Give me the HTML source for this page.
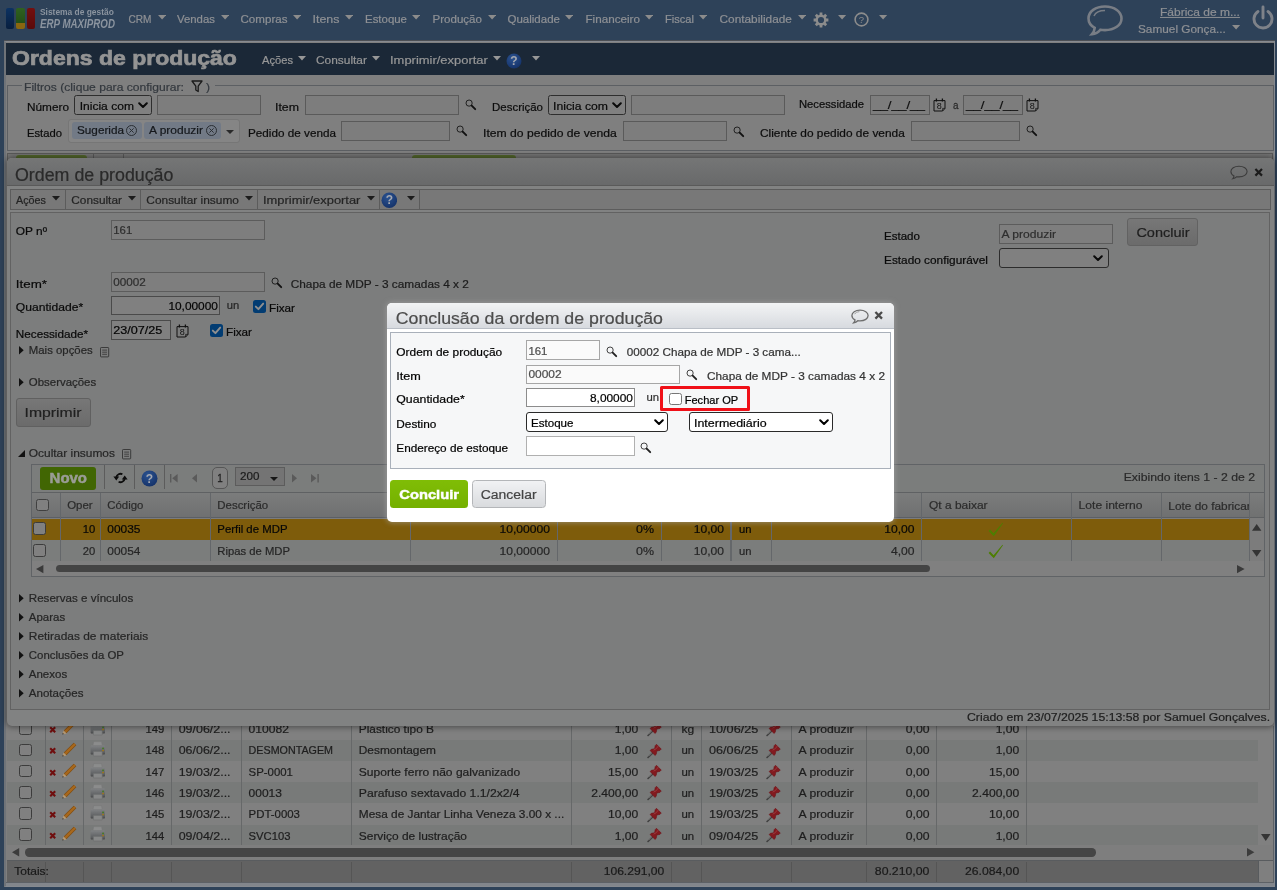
<!DOCTYPE html>
<html><head><meta charset="utf-8"><title>Ordens de produção</title>
<style>
html,body{margin:0;padding:0;}
body{width:1277px;height:890px;overflow:hidden;background:#2e4259;position:relative;font-family:"Liberation Sans",sans-serif;}
div,span.t,svg{position:absolute;box-sizing:border-box;}
span.t{white-space:nowrap;display:block;transform-origin:0 84.65%;-webkit-text-stroke:0.22px currentColor;}
</style></head><body><div id="root" style="left:0;top:0;width:1277px;height:890px;will-change:transform;">
<div style="left:0px;top:0px;width:1277px;height:890px;background:#2e4259;"></div>
<div style="left:6px;top:8px;width:8px;height:21px;border-radius:2px;background:linear-gradient(#0c3262,#081f3f);"></div>
<div style="left:16px;top:8px;width:9px;height:15px;border-radius:2px 2px 0 0;background:linear-gradient(#2f6120,#245016);"></div>
<div style="left:16px;top:23px;width:9px;height:6px;background:#8a6710;border-radius:0 0 2px 2px;"></div>
<div style="left:27px;top:8px;width:8px;height:21px;border-radius:2px;background:linear-gradient(#740f0f,#5a0a0a);"></div>
<span class="t" style="left:40.00px;top:7px;font-size:8.427px;line-height:10px;color:#8b949f;transform-origin:0 8px;transform:scaleY(1.172);font-weight:bold;-webkit-text-stroke:0.29px currentColor;-webkit-text-stroke:0;">Sistema de gestão</span>
<span class="t" style="left:40.00px;top:19px;font-size:9.758px;line-height:11px;color:#8b949f;transform-origin:0 9px;transform:scaleY(1.226);font-weight:bold;-webkit-text-stroke:0.34px currentColor;font-style:italic;-webkit-text-stroke:0;">ERP MAXIPROD</span>
<span class="t" style="left:128.50px;top:14px;font-size:10.099px;line-height:11px;color:#8e9094;transform-origin:0 9px;transform:scaleY(1.133);">CRM</span>
<svg style="left:157.7px;top:14.6px;" width="8.2" height="5.5" viewBox="0 0 8.2 5.5"><path d="M0 0H8.2L4.1 4.5Z" fill="#8c8c8c"/></svg>
<span class="t" style="left:177.00px;top:13px;font-size:11.389px;line-height:12px;color:#8e9094;transform-origin:0 10px;transform:scaleY(1.004);">Vendas</span>
<svg style="left:221.2px;top:14.6px;" width="8.2" height="5.5" viewBox="0 0 8.2 5.5"><path d="M0 0H8.2L4.1 4.5Z" fill="#8c8c8c"/></svg>
<span class="t" style="left:240.50px;top:13px;font-size:11.586px;line-height:12px;color:#8e9094;transform-origin:0 10px;transform:scaleY(0.987);">Compras</span>
<svg style="left:292.7px;top:14.6px;" width="8.2" height="5.5" viewBox="0 0 8.2 5.5"><path d="M0 0H8.2L4.1 4.5Z" fill="#8c8c8c"/></svg>
<span class="t" style="left:312.50px;top:12px;font-size:12.454px;line-height:14px;color:#8e9094;transform-origin:0 11px;transform:scaleY(0.919);">Itens</span>
<svg style="left:345.2px;top:14.6px;" width="8.2" height="5.5" viewBox="0 0 8.2 5.5"><path d="M0 0H8.2L4.1 4.5Z" fill="#8c8c8c"/></svg>
<span class="t" style="left:365.00px;top:13px;font-size:11.446px;line-height:12px;color:#8e9094;transform-origin:0 10px;transform:scaleY(0.999);">Estoque</span>
<svg style="left:412.2px;top:14.6px;" width="8.2" height="5.5" viewBox="0 0 8.2 5.5"><path d="M0 0H8.2L4.1 4.5Z" fill="#8c8c8c"/></svg>
<span class="t" style="left:432.50px;top:13px;font-size:11.563px;line-height:12px;color:#8e9094;transform-origin:0 10px;transform:scaleY(0.989);">Produção</span>
<svg style="left:487.7px;top:14.6px;" width="8.2" height="5.5" viewBox="0 0 8.2 5.5"><path d="M0 0H8.2L4.1 4.5Z" fill="#8c8c8c"/></svg>
<span class="t" style="left:507.50px;top:13px;font-size:11.515px;line-height:12px;color:#8e9094;transform-origin:0 10px;transform:scaleY(0.993);">Qualidade</span>
<svg style="left:565.2px;top:14.6px;" width="8.2" height="5.5" viewBox="0 0 8.2 5.5"><path d="M0 0H8.2L4.1 4.5Z" fill="#8c8c8c"/></svg>
<span class="t" style="left:585.50px;top:12px;font-size:11.673px;line-height:13px;color:#8e9094;transform-origin:0 11px;transform:scaleY(0.980);">Financeiro</span>
<svg style="left:645.2px;top:14.6px;" width="8.2" height="5.5" viewBox="0 0 8.2 5.5"><path d="M0 0H8.2L4.1 4.5Z" fill="#8c8c8c"/></svg>
<span class="t" style="left:665.00px;top:13px;font-size:11.105px;line-height:12px;color:#8e9094;transform-origin:0 10px;transform:scaleY(1.030);">Fiscal</span>
<svg style="left:699.2px;top:14.6px;" width="8.2" height="5.5" viewBox="0 0 8.2 5.5"><path d="M0 0H8.2L4.1 4.5Z" fill="#8c8c8c"/></svg>
<span class="t" style="left:719.50px;top:12px;font-size:11.855px;line-height:14px;color:#8e9094;transform-origin:0 11px;transform:scaleY(0.965);">Contabilidade</span>
<svg style="left:797.7px;top:14.6px;" width="8.2" height="5.5" viewBox="0 0 8.2 5.5"><path d="M0 0H8.2L4.1 4.5Z" fill="#8c8c8c"/></svg>
<svg style="left:813px;top:12px;" width="16" height="16" viewBox="0 0 16 16"><g fill="none" stroke="#8c8c8c"><circle cx="8" cy="8" r="4.3" stroke-width="2.4"/><path d="M8 0.6V3M8 13V15.4M0.6 8H3M13 8H15.4M2.8 2.8L4.5 4.5M11.5 11.5L13.2 13.2M2.8 13.2L4.5 11.5M11.5 4.5L13.2 2.8" stroke-width="2.8"/></g></svg>
<svg style="left:838.4px;top:14.6px;" width="8.2" height="5.5" viewBox="0 0 8.2 5.5"><path d="M0 0H8.2L4.1 4.5Z" fill="#8c8c8c"/></svg>
<svg style="left:854.4px;top:12.4px;" width="15" height="15" viewBox="0 0 15 15"><circle cx="7.5" cy="7.5" r="6.4" fill="none" stroke="#8c8c8c" stroke-width="1.6"/><text x="7.5" y="11" font-size="9.5" text-anchor="middle" fill="#8c8c8c" font-family="Liberation Sans">?</text></svg>
<svg style="left:879.4px;top:14.6px;" width="8.2" height="5.5" viewBox="0 0 8.2 5.5"><path d="M0 0H8.2L4.1 4.5Z" fill="#8c8c8c"/></svg>
<svg style="left:1086px;top:4px;" width="38" height="34" viewBox="0 0 38 34"><path d="M19 2.5C9.5 2.5 2.5 7.5 2.5 14.5c0 4 2.3 7.3 6.2 9.3c-0.2 2.6-1.3 4.8-2.7 6.4c3.6-0.4 6.6-2.3 8.4-4.5c1.5 0.3 3 0.4 4.6 0.4c9.5 0 16.5-5 16.5-11.6S28.5 2.5 19 2.5Z" fill="none" stroke="#787d85" stroke-width="2.6"/><path d="M8 12c1.5-3.5 6-5.5 11-5.5" fill="none" stroke="#787d85" stroke-width="1.5"/></svg>
<span class="t" style="left:1160.00px;top:5px;font-size:11.996px;line-height:14px;color:#8e9094;transform-origin:0 11px;transform:scaleY(0.954);text-decoration:underline;">Fábrica de m...</span>
<span class="t" style="left:1138.00px;top:22px;font-size:11.815px;line-height:14px;color:#8e9094;transform-origin:0 11px;transform:scaleY(0.968);">Samuel Gonça...</span>
<svg style="left:1232.4px;top:24.7px;" width="8.2" height="5.5" viewBox="0 0 8.2 5.5"><path d="M0 0H8.2L4.1 4.5Z" fill="#8c8c8c"/></svg>
<svg style="left:1251px;top:5px;" width="24" height="26" viewBox="0 0 24 26"><path d="M7 6.5A9 9 0 1 0 17 6.5" fill="none" stroke="#7e8289" stroke-width="2.9" stroke-linecap="round"/><path d="M12 2V13" stroke="#7e8289" stroke-width="2.9" stroke-linecap="round"/></svg>
<div style="left:4px;top:40px;width:1271px;height:1px;background:#4c4f54;"></div>
<div style="left:4px;top:41px;width:1271px;height:846px;background:#7f7f7f;border:1px solid #868a90;border-left:2px solid #6f7378;"></div>
<div style="left:6px;top:43px;width:1268px;height:32px;background:#1b2837;"></div>
<span class="t" style="left:12.00px;top:44px;font-size:23.008px;line-height:26px;color:#949494;transform-origin:0 21px;transform:scaleY(0.904);font-weight:bold;-webkit-text-stroke:0.81px currentColor;">Ordens de produção</span>
<span class="t" style="left:262.00px;top:54px;font-size:11.154px;line-height:12px;color:#979797;transform-origin:0 10px;transform:scaleY(1.026);">Ações</span>
<svg style="left:297.7px;top:56px;" width="8" height="5.5" viewBox="0 0 8 5.5"><path d="M0 0H8L4.0 4.5Z" fill="#979797"/></svg>
<span class="t" style="left:316.00px;top:53px;font-size:11.916px;line-height:14px;color:#979797;transform-origin:0 11px;transform:scaleY(0.960);">Consultar</span>
<svg style="left:371.7px;top:56px;" width="8" height="5.5" viewBox="0 0 8 5.5"><path d="M0 0H8L4.0 4.5Z" fill="#979797"/></svg>
<span class="t" style="left:390.00px;top:52px;font-size:12.969px;line-height:15px;color:#979797;transform-origin:0 12px;transform:scaleY(0.882);">Imprimir/exportar</span>
<svg style="left:492.7px;top:56px;" width="8" height="5.5" viewBox="0 0 8 5.5"><path d="M0 0H8L4.0 4.5Z" fill="#979797"/></svg>
<svg style="left:506.0px;top:52.5px;" width="16.0" height="16.0" viewBox="0 0 16.0 16.0"><defs><radialGradient id="hg514_60" cx="0.4" cy="0.3" r="0.8"><stop offset="0" stop-color="#2c5390"/><stop offset="1" stop-color="#122f66"/></radialGradient></defs><circle cx="8.0" cy="8.0" r="7.5" fill="url(#hg514_60)"/><text x="8.0" y="12.2" font-size="12" font-weight="bold" text-anchor="middle" fill="#a4a8b0" font-family="Liberation Sans">?</text></svg>
<svg style="left:531.5px;top:56px;" width="8" height="5.5" viewBox="0 0 8 5.5"><path d="M0 0H8L4.0 4.5Z" fill="#979797"/></svg>
<div style="left:7px;top:85px;width:1267px;height:66px;border:1px solid #5c5f63;"></div>
<div style="left:22px;top:80px;width:193px;height:14px;background:#7f7f7f;"></div>
<span class="t" style="left:24.00px;top:80px;font-size:12.096px;line-height:14px;color:#33383e;transform-origin:0 11px;transform:scaleY(0.946);">Filtros (clique para configurar:</span>
<svg style="left:191px;top:80px;" width="12" height="13" viewBox="0 0 12 13"><path d="M1 1H11L7.2 6.2V11.5L4.8 10V6.2Z" fill="none" stroke="#1b1b1b" stroke-width="1.3" stroke-linejoin="round"/></svg>
<span class="t" style="left:206.00px;top:80px;font-size:12.011px;line-height:14px;color:#33383e;transform-origin:0 11px;transform:scaleY(0.952);">)</span>
<span class="t" style="left:27.00px;top:100px;font-size:11.809px;line-height:14px;color:#0d0d0d;transform-origin:0 11px;transform:scaleY(0.969);">Número</span>
<div style="left:74px;top:95px;width:78px;height:20px;background:#808080;border:1px solid #2e2e2e;border-radius:2.5px;"></div>
<span class="t" style="left:79.70px;top:99px;font-size:12.063px;line-height:14px;color:#0a0a0a;transform-origin:0 11px;transform:scaleY(0.948);">Inicia com</span>
<svg style="left:137.5px;top:101.5px;" width="10" height="7" viewBox="0 0 10 7"><path d="M1.2 1.2L5 5L8.8 1.2" fill="none" stroke="#0a0a0a" stroke-width="2" stroke-linecap="round" stroke-linejoin="round"/></svg>
<div style="left:157px;top:95px;width:104px;height:20px;background:#7d7d7d;border:1px solid #5a5a5a;"></div>
<span class="t" style="left:275.00px;top:100px;font-size:12.340px;line-height:14px;color:#0d0d0d;transform-origin:0 11px;transform:scaleY(0.927);">Item</span>
<div style="left:305px;top:95px;width:154px;height:20px;background:#7d7d7d;border:1px solid #5a5a5a;"></div>
<svg style="left:465px;top:99px;" width="12" height="12" viewBox="0 0 12 12"><circle cx="4.1" cy="4.1" r="3.1" fill="none" stroke="#111" stroke-width="1" opacity="0.85"/><path d="M6.7 6.7L10.2 10.2" stroke="#111" stroke-width="1.9" stroke-linecap="round"/></svg>
<span class="t" style="left:492.00px;top:101px;font-size:11.471px;line-height:12px;color:#0d0d0d;transform-origin:0 10px;transform:scaleY(0.997);">Descrição</span>
<div style="left:548px;top:95px;width:78px;height:20px;background:#808080;border:1px solid #2e2e2e;border-radius:2.5px;"></div>
<span class="t" style="left:553.00px;top:99px;font-size:12.218px;line-height:14px;color:#0a0a0a;transform-origin:0 11px;transform:scaleY(0.936);">Inicia com</span>
<svg style="left:611.5px;top:101.5px;" width="10" height="7" viewBox="0 0 10 7"><path d="M1.2 1.2L5 5L8.8 1.2" fill="none" stroke="#0a0a0a" stroke-width="2" stroke-linecap="round" stroke-linejoin="round"/></svg>
<div style="left:631px;top:95px;width:154px;height:20px;background:#7d7d7d;border:1px solid #5a5a5a;"></div>
<span class="t" style="left:799.00px;top:98px;font-size:11.243px;line-height:12px;color:#0d0d0d;transform-origin:0 10px;transform:scaleY(1.018);">Necessidade</span>
<div style="left:870px;top:95px;width:60px;height:20px;background:#7d7d7d;border:1px solid #5a5a5a;"></div>
<span class="t" style="left:873.00px;top:97px;font-size:13.359px;line-height:15px;color:#0d0d0d;transform-origin:0 12px;transform:scaleY(0.856);">__/__/__</span>
<svg style="left:933px;top:98px;" width="13" height="14" viewBox="0 0 13 14"><path d="M1 2.6H12V10.4L9.6 13H1Z" fill="none" stroke="#111" stroke-width="1" stroke-linejoin="round"/><path d="M9.6 13V10.4H12" fill="none" stroke="#111" stroke-width="0.7"/><path d="M3.4 0.6v2.8M9.4 0.6v2.8" stroke="#111" stroke-width="1.3"/><text x="6.3" y="11.4" font-size="9" text-anchor="middle" fill="#111" font-family="Liberation Sans">8</text></svg>
<span class="t" style="left:953.00px;top:100px;font-size:9.889px;line-height:11px;color:#2a2a2a;transform-origin:0 9px;transform:scaleY(1.157);">a</span>
<div style="left:963px;top:95px;width:60px;height:20px;background:#7d7d7d;border:1px solid #5a5a5a;"></div>
<span class="t" style="left:966.00px;top:97px;font-size:13.359px;line-height:15px;color:#0d0d0d;transform-origin:0 12px;transform:scaleY(0.856);">__/__/__</span>
<svg style="left:1026px;top:98px;" width="13" height="14" viewBox="0 0 13 14"><path d="M1 2.6H12V10.4L9.6 13H1Z" fill="none" stroke="#111" stroke-width="1" stroke-linejoin="round"/><path d="M9.6 13V10.4H12" fill="none" stroke="#111" stroke-width="0.7"/><path d="M3.4 0.6v2.8M9.4 0.6v2.8" stroke="#111" stroke-width="1.3"/><text x="6.3" y="11.4" font-size="9" text-anchor="middle" fill="#111" font-family="Liberation Sans">8</text></svg>
<span class="t" style="left:27.00px;top:127px;font-size:11.242px;line-height:12px;color:#0d0d0d;transform-origin:0 10px;transform:scaleY(1.018);">Estado</span>
<div style="left:68px;top:119px;width:172px;height:24px;background:#858585;border:1px solid #767676;border-radius:3px;"></div>
<div style="left:72px;top:122px;width:70px;height:17px;background:#727a86;border-radius:3px;"></div>
<span class="t" style="left:77.00px;top:123px;font-size:11.741px;line-height:13px;color:#15181c;transform-origin:0 11px;transform:scaleY(0.974);">Sugerida</span>
<svg style="left:125px;top:124px;" width="13" height="13" viewBox="0 0 13 13"><circle cx="6.5" cy="6.5" r="5" fill="none" stroke="#2a2e33" stroke-width="1"/><path d="M4.4 4.4L8.6 8.6M8.6 4.4L4.4 8.6" stroke="#2a2e33" stroke-width="1"/></svg>
<div style="left:144px;top:122px;width:77px;height:17px;background:#727a86;border-radius:3px;"></div>
<span class="t" style="left:149.00px;top:123px;font-size:11.993px;line-height:14px;color:#15181c;transform-origin:0 11px;transform:scaleY(0.954);">A produzir</span>
<svg style="left:204.5px;top:124px;" width="13" height="13" viewBox="0 0 13 13"><circle cx="6.5" cy="6.5" r="5" fill="none" stroke="#2a2e33" stroke-width="1"/><path d="M4.4 4.4L8.6 8.6M8.6 4.4L4.4 8.6" stroke="#2a2e33" stroke-width="1"/></svg>
<svg style="left:226px;top:129.5px;" width="8" height="5" viewBox="0 0 8 5"><path d="M0 0H8L4.0 4Z" fill="#2a2a2a"/></svg>
<span class="t" style="left:248.00px;top:126px;font-size:11.723px;line-height:13px;color:#0d0d0d;transform-origin:0 11px;transform:scaleY(0.976);">Pedido de venda</span>
<div style="left:341px;top:121px;width:109px;height:20px;background:#7d7d7d;border:1px solid #5a5a5a;"></div>
<svg style="left:456px;top:125px;" width="12" height="12" viewBox="0 0 12 12"><circle cx="4.1" cy="4.1" r="3.1" fill="none" stroke="#111" stroke-width="1" opacity="0.85"/><path d="M6.7 6.7L10.2 10.2" stroke="#111" stroke-width="1.9" stroke-linecap="round"/></svg>
<span class="t" style="left:483.00px;top:126px;font-size:12.173px;line-height:14px;color:#0d0d0d;transform-origin:0 11px;transform:scaleY(0.940);">Item do pedido de venda</span>
<div style="left:623px;top:121px;width:104px;height:20px;background:#7d7d7d;border:1px solid #5a5a5a;"></div>
<svg style="left:732.5px;top:125.5px;" width="12" height="12" viewBox="0 0 12 12"><circle cx="4.1" cy="4.1" r="3.1" fill="none" stroke="#111" stroke-width="1" opacity="0.85"/><path d="M6.7 6.7L10.2 10.2" stroke="#111" stroke-width="1.9" stroke-linecap="round"/></svg>
<span class="t" style="left:760.00px;top:126px;font-size:11.908px;line-height:14px;color:#0d0d0d;transform-origin:0 11px;transform:scaleY(0.961);">Cliente do pedido de venda</span>
<div style="left:911px;top:121px;width:109px;height:20px;background:#7d7d7d;border:1px solid #5a5a5a;"></div>
<svg style="left:1026px;top:125px;" width="12" height="12" viewBox="0 0 12 12"><circle cx="4.1" cy="4.1" r="3.1" fill="none" stroke="#111" stroke-width="1" opacity="0.85"/><path d="M6.7 6.7L10.2 10.2" stroke="#111" stroke-width="1.9" stroke-linecap="round"/></svg>
<div style="left:7px;top:153px;width:1266px;height:8px;background:#767676;border:1px solid #5a5a5a;"></div>
<div style="left:93px;top:154px;width:1px;height:6px;background:#5a5a5a;"></div>
<div style="left:123px;top:154px;width:1px;height:6px;background:#5a5a5a;"></div>
<div style="left:16px;top:155px;width:71px;height:6px;background:#54682c;border-radius:3px 3px 0 0;"></div>
<div style="left:412px;top:155px;width:104px;height:6px;background:#54682c;border-radius:3px 3px 0 0;"></div>
<div style="left:7px;top:718px;width:1251px;height:22px;background:#808080;"></div>
<div style="left:19px;top:722px;width:13px;height:13px;background:#808080;border:1px solid #3c3c3c;border-radius:2.5px;"></div>
<svg style="left:49px;top:725.95px;" width="8" height="8" viewBox="0 0 8 8"><path d="M1.2 1.2L6.2 6.2M6.2 1.2L1.2 6.2" stroke="#6f0e0e" stroke-width="2.1"/></svg>
<svg style="left:62.4px;top:720.15px;" width="15" height="15" viewBox="0 0 15 15"><path d="M3.1 11.9L13 2" stroke="#7f4e14" stroke-width="3.7" stroke-linecap="butt"/><path d="M3.1 11.9L13 2" stroke="#a8681c" stroke-width="2.3" stroke-linecap="butt"/><path d="M0.5 14.3L1.5 10.4L4.6 13.4Z" fill="#b89a72"/><path d="M0.4 14.4L0.8 12.9L1.9 14Z" fill="#141414"/></svg>
<svg style="left:90px;top:719.75px;" width="16" height="16" viewBox="0 0 16 16"><defs><linearGradient id="pg" x1="0" y1="0" x2="0" y2="1"><stop offset="0" stop-color="#808284"/><stop offset="0.75" stop-color="#5e6062"/><stop offset="1" stop-color="#454647"/></linearGradient></defs><path d="M3.6 0.6H11.6L12.2 4.6H3Z" fill="#8b8c8c" stroke="#767777" stroke-width="0.5"/><path d="M1.8 4.4H13.8C14.5 4.4 15 4.9 15 5.6V12.6C15 13.2 14.6 13.6 14 13.6H1.6C1 13.6 0.6 13.2 0.6 12.6V5.6C0.6 4.9 1.1 4.4 1.8 4.4Z" fill="url(#pg)"/><path d="M3.4 10.4H12.2V15H3.4Z" fill="#878888" stroke="#6c6d6d" stroke-width="0.6"/><rect x="12.2" y="6.6" width="1.7" height="1.6" rx="0.6" fill="#3f7a1e"/><rect x="12.2" y="8.8" width="1.7" height="1.5" rx="0.6" fill="#a8780c"/></svg>
<span class="t" style="left:145.40px;top:723px;font-size:11.328px;line-height:12px;color:#1e1e1e;transform-origin:0 10px;transform:scaleY(1.010);">149</span>
<span class="t" style="left:178.70px;top:722px;font-size:12.446px;line-height:14px;color:#1e1e1e;transform-origin:0 11px;transform:scaleY(0.919);">09/06/2...</span>
<span class="t" style="left:248.60px;top:722px;font-size:12.107px;line-height:14px;color:#1e1e1e;transform-origin:0 11px;transform:scaleY(0.945);">010082</span>
<span class="t" style="left:358.80px;top:722px;font-size:11.868px;line-height:14px;color:#1e1e1e;transform-origin:0 11px;transform:scaleY(0.964);">Plástico tipo B</span>
<span class="t" style="left:614.75px;top:722px;font-size:12.100px;line-height:14px;color:#1e1e1e;transform-origin:0 11px;transform:scaleY(0.945);">1,00</span>
<svg style="left:646.6px;top:720.35px;" width="17" height="17" viewBox="0 0 16 16"><path d="M1 14.6L5.6 10" stroke="#3e3e3e" stroke-width="1.5" stroke-linecap="round"/><path d="M1.8 13.4L5 10.2" stroke="#8a8a8a" stroke-width="0.5"/><path d="M7.58 12.69L8.71 11.56L9.27 8.45L12.17 7.95L13.44 6.68L8.92 2.16L7.65 3.43L7.15 6.33L4.04 6.89L2.91 8.02Z" fill="#821a1f" stroke="#6a1116" stroke-width="0.5" stroke-linejoin="round"/><path d="M6.2 7.6L8.6 6.4L10.8 3.6" fill="none" stroke="#a04045" stroke-width="0.9" opacity="0.8"/></svg>
<span class="t" style="left:681.40px;top:722px;font-size:12.025px;line-height:14px;color:#1e1e1e;transform-origin:0 11px;transform:scaleY(0.951);">kg</span>
<span class="t" style="left:709.00px;top:722px;font-size:12.665px;line-height:14px;color:#1e1e1e;transform-origin:0 11px;transform:scaleY(0.903);">10/06/25</span>
<svg style="left:765.9px;top:720.35px;" width="17" height="17" viewBox="0 0 16 16"><path d="M1 14.6L5.6 10" stroke="#3e3e3e" stroke-width="1.5" stroke-linecap="round"/><path d="M1.8 13.4L5 10.2" stroke="#8a8a8a" stroke-width="0.5"/><path d="M7.58 12.69L8.71 11.56L9.27 8.45L12.17 7.95L13.44 6.68L8.92 2.16L7.65 3.43L7.15 6.33L4.04 6.89L2.91 8.02Z" fill="#821a1f" stroke="#6a1116" stroke-width="0.5" stroke-linejoin="round"/><path d="M6.2 7.6L8.6 6.4L10.8 3.6" fill="none" stroke="#a04045" stroke-width="0.9" opacity="0.8"/></svg>
<span class="t" style="left:798.60px;top:722px;font-size:12.193px;line-height:14px;color:#1e1e1e;transform-origin:0 11px;transform:scaleY(0.938);">A produzir</span>
<span class="t" style="left:905.70px;top:722px;font-size:12.228px;line-height:14px;color:#1e1e1e;transform-origin:0 11px;transform:scaleY(0.936);">0,00</span>
<span class="t" style="left:995.65px;top:722px;font-size:12.100px;line-height:14px;color:#1e1e1e;transform-origin:0 11px;transform:scaleY(0.945);">1,00</span>
<div style="left:7px;top:740px;width:1251px;height:21px;background:#787a79;"></div>
<div style="left:19px;top:744px;width:13px;height:12px;background:#808080;border:1px solid #3c3c3c;border-radius:2.5px;"></div>
<svg style="left:49px;top:747.45px;" width="8" height="8" viewBox="0 0 8 8"><path d="M1.2 1.2L6.2 6.2M6.2 1.2L1.2 6.2" stroke="#6f0e0e" stroke-width="2.1"/></svg>
<svg style="left:62.4px;top:741.65px;" width="15" height="15" viewBox="0 0 15 15"><path d="M3.1 11.9L13 2" stroke="#7f4e14" stroke-width="3.7" stroke-linecap="butt"/><path d="M3.1 11.9L13 2" stroke="#a8681c" stroke-width="2.3" stroke-linecap="butt"/><path d="M0.5 14.3L1.5 10.4L4.6 13.4Z" fill="#b89a72"/><path d="M0.4 14.4L0.8 12.9L1.9 14Z" fill="#141414"/></svg>
<svg style="left:90px;top:741.25px;" width="16" height="16" viewBox="0 0 16 16"><defs><linearGradient id="pg" x1="0" y1="0" x2="0" y2="1"><stop offset="0" stop-color="#808284"/><stop offset="0.75" stop-color="#5e6062"/><stop offset="1" stop-color="#454647"/></linearGradient></defs><path d="M3.6 0.6H11.6L12.2 4.6H3Z" fill="#8b8c8c" stroke="#767777" stroke-width="0.5"/><path d="M1.8 4.4H13.8C14.5 4.4 15 4.9 15 5.6V12.6C15 13.2 14.6 13.6 14 13.6H1.6C1 13.6 0.6 13.2 0.6 12.6V5.6C0.6 4.9 1.1 4.4 1.8 4.4Z" fill="url(#pg)"/><path d="M3.4 10.4H12.2V15H3.4Z" fill="#878888" stroke="#6c6d6d" stroke-width="0.6"/><rect x="12.2" y="6.6" width="1.7" height="1.6" rx="0.6" fill="#3f7a1e"/><rect x="12.2" y="8.8" width="1.7" height="1.5" rx="0.6" fill="#a8780c"/></svg>
<span class="t" style="left:145.40px;top:744px;font-size:11.328px;line-height:12px;color:#1e1e1e;transform-origin:0 10px;transform:scaleY(1.010);">148</span>
<span class="t" style="left:178.70px;top:743px;font-size:12.446px;line-height:14px;color:#1e1e1e;transform-origin:0 11px;transform:scaleY(0.919);">06/06/2...</span>
<span class="t" style="left:248.60px;top:744px;font-size:10.723px;line-height:12px;color:#1e1e1e;transform-origin:0 10px;transform:scaleY(1.067);">DESMONTAGEM</span>
<span class="t" style="left:358.80px;top:743px;font-size:11.872px;line-height:14px;color:#1e1e1e;transform-origin:0 11px;transform:scaleY(0.964);">Desmontagem</span>
<span class="t" style="left:614.75px;top:743px;font-size:12.100px;line-height:14px;color:#1e1e1e;transform-origin:0 11px;transform:scaleY(0.945);">1,00</span>
<svg style="left:646.6px;top:741.85px;" width="17" height="17" viewBox="0 0 16 16"><path d="M1 14.6L5.6 10" stroke="#3e3e3e" stroke-width="1.5" stroke-linecap="round"/><path d="M1.8 13.4L5 10.2" stroke="#8a8a8a" stroke-width="0.5"/><path d="M7.58 12.69L8.71 11.56L9.27 8.45L12.17 7.95L13.44 6.68L8.92 2.16L7.65 3.43L7.15 6.33L4.04 6.89L2.91 8.02Z" fill="#821a1f" stroke="#6a1116" stroke-width="0.5" stroke-linejoin="round"/><path d="M6.2 7.6L8.6 6.4L10.8 3.6" fill="none" stroke="#a04045" stroke-width="0.9" opacity="0.8"/></svg>
<span class="t" style="left:681.40px;top:744px;font-size:11.418px;line-height:12px;color:#1e1e1e;transform-origin:0 10px;transform:scaleY(1.002);">un</span>
<span class="t" style="left:709.00px;top:743px;font-size:12.665px;line-height:14px;color:#1e1e1e;transform-origin:0 11px;transform:scaleY(0.903);">06/06/25</span>
<svg style="left:765.9px;top:741.85px;" width="17" height="17" viewBox="0 0 16 16"><path d="M1 14.6L5.6 10" stroke="#3e3e3e" stroke-width="1.5" stroke-linecap="round"/><path d="M1.8 13.4L5 10.2" stroke="#8a8a8a" stroke-width="0.5"/><path d="M7.58 12.69L8.71 11.56L9.27 8.45L12.17 7.95L13.44 6.68L8.92 2.16L7.65 3.43L7.15 6.33L4.04 6.89L2.91 8.02Z" fill="#821a1f" stroke="#6a1116" stroke-width="0.5" stroke-linejoin="round"/><path d="M6.2 7.6L8.6 6.4L10.8 3.6" fill="none" stroke="#a04045" stroke-width="0.9" opacity="0.8"/></svg>
<span class="t" style="left:798.60px;top:743px;font-size:12.193px;line-height:14px;color:#1e1e1e;transform-origin:0 11px;transform:scaleY(0.938);">A produzir</span>
<span class="t" style="left:905.70px;top:743px;font-size:12.228px;line-height:14px;color:#1e1e1e;transform-origin:0 11px;transform:scaleY(0.936);">0,00</span>
<span class="t" style="left:995.65px;top:743px;font-size:12.100px;line-height:14px;color:#1e1e1e;transform-origin:0 11px;transform:scaleY(0.945);">1,00</span>
<div style="left:7px;top:761px;width:1251px;height:21px;background:#808080;"></div>
<div style="left:19px;top:765px;width:13px;height:12px;background:#808080;border:1px solid #3c3c3c;border-radius:2.5px;"></div>
<svg style="left:49px;top:768.7px;" width="8" height="8" viewBox="0 0 8 8"><path d="M1.2 1.2L6.2 6.2M6.2 1.2L1.2 6.2" stroke="#6f0e0e" stroke-width="2.1"/></svg>
<svg style="left:62.4px;top:762.9px;" width="15" height="15" viewBox="0 0 15 15"><path d="M3.1 11.9L13 2" stroke="#7f4e14" stroke-width="3.7" stroke-linecap="butt"/><path d="M3.1 11.9L13 2" stroke="#a8681c" stroke-width="2.3" stroke-linecap="butt"/><path d="M0.5 14.3L1.5 10.4L4.6 13.4Z" fill="#b89a72"/><path d="M0.4 14.4L0.8 12.9L1.9 14Z" fill="#141414"/></svg>
<svg style="left:90px;top:762.5px;" width="16" height="16" viewBox="0 0 16 16"><defs><linearGradient id="pg" x1="0" y1="0" x2="0" y2="1"><stop offset="0" stop-color="#808284"/><stop offset="0.75" stop-color="#5e6062"/><stop offset="1" stop-color="#454647"/></linearGradient></defs><path d="M3.6 0.6H11.6L12.2 4.6H3Z" fill="#8b8c8c" stroke="#767777" stroke-width="0.5"/><path d="M1.8 4.4H13.8C14.5 4.4 15 4.9 15 5.6V12.6C15 13.2 14.6 13.6 14 13.6H1.6C1 13.6 0.6 13.2 0.6 12.6V5.6C0.6 4.9 1.1 4.4 1.8 4.4Z" fill="url(#pg)"/><path d="M3.4 10.4H12.2V15H3.4Z" fill="#878888" stroke="#6c6d6d" stroke-width="0.6"/><rect x="12.2" y="6.6" width="1.7" height="1.6" rx="0.6" fill="#3f7a1e"/><rect x="12.2" y="8.8" width="1.7" height="1.5" rx="0.6" fill="#a8780c"/></svg>
<span class="t" style="left:145.40px;top:766px;font-size:11.328px;line-height:12px;color:#1e1e1e;transform-origin:0 10px;transform:scaleY(1.010);">147</span>
<span class="t" style="left:178.70px;top:765px;font-size:12.446px;line-height:14px;color:#1e1e1e;transform-origin:0 11px;transform:scaleY(0.919);">19/03/2...</span>
<span class="t" style="left:248.60px;top:766px;font-size:11.409px;line-height:12px;color:#1e1e1e;transform-origin:0 10px;transform:scaleY(1.003);">SP-0001</span>
<span class="t" style="left:358.80px;top:765px;font-size:12.069px;line-height:14px;color:#1e1e1e;transform-origin:0 11px;transform:scaleY(0.948);">Suporte ferro não galvanizado</span>
<span class="t" style="left:608.02px;top:765px;font-size:12.100px;line-height:14px;color:#1e1e1e;transform-origin:0 11px;transform:scaleY(0.945);">15,00</span>
<svg style="left:646.6px;top:763.1px;" width="17" height="17" viewBox="0 0 16 16"><path d="M1 14.6L5.6 10" stroke="#3e3e3e" stroke-width="1.5" stroke-linecap="round"/><path d="M1.8 13.4L5 10.2" stroke="#8a8a8a" stroke-width="0.5"/><path d="M7.58 12.69L8.71 11.56L9.27 8.45L12.17 7.95L13.44 6.68L8.92 2.16L7.65 3.43L7.15 6.33L4.04 6.89L2.91 8.02Z" fill="#821a1f" stroke="#6a1116" stroke-width="0.5" stroke-linejoin="round"/><path d="M6.2 7.6L8.6 6.4L10.8 3.6" fill="none" stroke="#a04045" stroke-width="0.9" opacity="0.8"/></svg>
<span class="t" style="left:681.40px;top:766px;font-size:11.418px;line-height:12px;color:#1e1e1e;transform-origin:0 10px;transform:scaleY(1.002);">un</span>
<span class="t" style="left:709.00px;top:765px;font-size:12.665px;line-height:14px;color:#1e1e1e;transform-origin:0 11px;transform:scaleY(0.903);">19/03/25</span>
<svg style="left:765.9px;top:763.1px;" width="17" height="17" viewBox="0 0 16 16"><path d="M1 14.6L5.6 10" stroke="#3e3e3e" stroke-width="1.5" stroke-linecap="round"/><path d="M1.8 13.4L5 10.2" stroke="#8a8a8a" stroke-width="0.5"/><path d="M7.58 12.69L8.71 11.56L9.27 8.45L12.17 7.95L13.44 6.68L8.92 2.16L7.65 3.43L7.15 6.33L4.04 6.89L2.91 8.02Z" fill="#821a1f" stroke="#6a1116" stroke-width="0.5" stroke-linejoin="round"/><path d="M6.2 7.6L8.6 6.4L10.8 3.6" fill="none" stroke="#a04045" stroke-width="0.9" opacity="0.8"/></svg>
<span class="t" style="left:798.60px;top:765px;font-size:12.193px;line-height:14px;color:#1e1e1e;transform-origin:0 11px;transform:scaleY(0.938);">A produzir</span>
<span class="t" style="left:905.70px;top:765px;font-size:12.228px;line-height:14px;color:#1e1e1e;transform-origin:0 11px;transform:scaleY(0.936);">0,00</span>
<span class="t" style="left:988.92px;top:765px;font-size:12.100px;line-height:14px;color:#1e1e1e;transform-origin:0 11px;transform:scaleY(0.945);">15,00</span>
<div style="left:7px;top:782px;width:1251px;height:21px;background:#787a79;"></div>
<div style="left:19px;top:786px;width:13px;height:13px;background:#808080;border:1px solid #3c3c3c;border-radius:2.5px;"></div>
<svg style="left:49px;top:789.85px;" width="8" height="8" viewBox="0 0 8 8"><path d="M1.2 1.2L6.2 6.2M6.2 1.2L1.2 6.2" stroke="#6f0e0e" stroke-width="2.1"/></svg>
<svg style="left:62.4px;top:784.05px;" width="15" height="15" viewBox="0 0 15 15"><path d="M3.1 11.9L13 2" stroke="#7f4e14" stroke-width="3.7" stroke-linecap="butt"/><path d="M3.1 11.9L13 2" stroke="#a8681c" stroke-width="2.3" stroke-linecap="butt"/><path d="M0.5 14.3L1.5 10.4L4.6 13.4Z" fill="#b89a72"/><path d="M0.4 14.4L0.8 12.9L1.9 14Z" fill="#141414"/></svg>
<svg style="left:90px;top:783.65px;" width="16" height="16" viewBox="0 0 16 16"><defs><linearGradient id="pg" x1="0" y1="0" x2="0" y2="1"><stop offset="0" stop-color="#808284"/><stop offset="0.75" stop-color="#5e6062"/><stop offset="1" stop-color="#454647"/></linearGradient></defs><path d="M3.6 0.6H11.6L12.2 4.6H3Z" fill="#8b8c8c" stroke="#767777" stroke-width="0.5"/><path d="M1.8 4.4H13.8C14.5 4.4 15 4.9 15 5.6V12.6C15 13.2 14.6 13.6 14 13.6H1.6C1 13.6 0.6 13.2 0.6 12.6V5.6C0.6 4.9 1.1 4.4 1.8 4.4Z" fill="url(#pg)"/><path d="M3.4 10.4H12.2V15H3.4Z" fill="#878888" stroke="#6c6d6d" stroke-width="0.6"/><rect x="12.2" y="6.6" width="1.7" height="1.6" rx="0.6" fill="#3f7a1e"/><rect x="12.2" y="8.8" width="1.7" height="1.5" rx="0.6" fill="#a8780c"/></svg>
<span class="t" style="left:145.40px;top:787px;font-size:11.328px;line-height:12px;color:#1e1e1e;transform-origin:0 10px;transform:scaleY(1.010);">146</span>
<span class="t" style="left:178.70px;top:786px;font-size:12.446px;line-height:14px;color:#1e1e1e;transform-origin:0 11px;transform:scaleY(0.919);">19/03/2...</span>
<span class="t" style="left:248.60px;top:786px;font-size:12.011px;line-height:14px;color:#1e1e1e;transform-origin:0 11px;transform:scaleY(0.952);">00013</span>
<span class="t" style="left:358.80px;top:786px;font-size:12.161px;line-height:14px;color:#1e1e1e;transform-origin:0 11px;transform:scaleY(0.941);">Parafuso sextavado 1.1/2x2/4</span>
<span class="t" style="left:591.20px;top:786px;font-size:12.100px;line-height:14px;color:#1e1e1e;transform-origin:0 11px;transform:scaleY(0.945);">2.400,00</span>
<svg style="left:646.6px;top:784.25px;" width="17" height="17" viewBox="0 0 16 16"><path d="M1 14.6L5.6 10" stroke="#3e3e3e" stroke-width="1.5" stroke-linecap="round"/><path d="M1.8 13.4L5 10.2" stroke="#8a8a8a" stroke-width="0.5"/><path d="M7.58 12.69L8.71 11.56L9.27 8.45L12.17 7.95L13.44 6.68L8.92 2.16L7.65 3.43L7.15 6.33L4.04 6.89L2.91 8.02Z" fill="#821a1f" stroke="#6a1116" stroke-width="0.5" stroke-linejoin="round"/><path d="M6.2 7.6L8.6 6.4L10.8 3.6" fill="none" stroke="#a04045" stroke-width="0.9" opacity="0.8"/></svg>
<span class="t" style="left:681.40px;top:787px;font-size:11.418px;line-height:12px;color:#1e1e1e;transform-origin:0 10px;transform:scaleY(1.002);">un</span>
<span class="t" style="left:709.00px;top:786px;font-size:12.665px;line-height:14px;color:#1e1e1e;transform-origin:0 11px;transform:scaleY(0.903);">19/03/25</span>
<svg style="left:765.9px;top:784.25px;" width="17" height="17" viewBox="0 0 16 16"><path d="M1 14.6L5.6 10" stroke="#3e3e3e" stroke-width="1.5" stroke-linecap="round"/><path d="M1.8 13.4L5 10.2" stroke="#8a8a8a" stroke-width="0.5"/><path d="M7.58 12.69L8.71 11.56L9.27 8.45L12.17 7.95L13.44 6.68L8.92 2.16L7.65 3.43L7.15 6.33L4.04 6.89L2.91 8.02Z" fill="#821a1f" stroke="#6a1116" stroke-width="0.5" stroke-linejoin="round"/><path d="M6.2 7.6L8.6 6.4L10.8 3.6" fill="none" stroke="#a04045" stroke-width="0.9" opacity="0.8"/></svg>
<span class="t" style="left:798.60px;top:786px;font-size:12.193px;line-height:14px;color:#1e1e1e;transform-origin:0 11px;transform:scaleY(0.938);">A produzir</span>
<span class="t" style="left:905.70px;top:786px;font-size:12.228px;line-height:14px;color:#1e1e1e;transform-origin:0 11px;transform:scaleY(0.936);">0,00</span>
<span class="t" style="left:972.10px;top:786px;font-size:12.100px;line-height:14px;color:#1e1e1e;transform-origin:0 11px;transform:scaleY(0.945);">2.400,00</span>
<div style="left:7px;top:803px;width:1251px;height:22px;background:#808080;"></div>
<div style="left:19px;top:807px;width:13px;height:13px;background:#808080;border:1px solid #3c3c3c;border-radius:2.5px;"></div>
<svg style="left:49px;top:811.1500000000001px;" width="8" height="8" viewBox="0 0 8 8"><path d="M1.2 1.2L6.2 6.2M6.2 1.2L1.2 6.2" stroke="#6f0e0e" stroke-width="2.1"/></svg>
<svg style="left:62.4px;top:805.35px;" width="15" height="15" viewBox="0 0 15 15"><path d="M3.1 11.9L13 2" stroke="#7f4e14" stroke-width="3.7" stroke-linecap="butt"/><path d="M3.1 11.9L13 2" stroke="#a8681c" stroke-width="2.3" stroke-linecap="butt"/><path d="M0.5 14.3L1.5 10.4L4.6 13.4Z" fill="#b89a72"/><path d="M0.4 14.4L0.8 12.9L1.9 14Z" fill="#141414"/></svg>
<svg style="left:90px;top:804.95px;" width="16" height="16" viewBox="0 0 16 16"><defs><linearGradient id="pg" x1="0" y1="0" x2="0" y2="1"><stop offset="0" stop-color="#808284"/><stop offset="0.75" stop-color="#5e6062"/><stop offset="1" stop-color="#454647"/></linearGradient></defs><path d="M3.6 0.6H11.6L12.2 4.6H3Z" fill="#8b8c8c" stroke="#767777" stroke-width="0.5"/><path d="M1.8 4.4H13.8C14.5 4.4 15 4.9 15 5.6V12.6C15 13.2 14.6 13.6 14 13.6H1.6C1 13.6 0.6 13.2 0.6 12.6V5.6C0.6 4.9 1.1 4.4 1.8 4.4Z" fill="url(#pg)"/><path d="M3.4 10.4H12.2V15H3.4Z" fill="#878888" stroke="#6c6d6d" stroke-width="0.6"/><rect x="12.2" y="6.6" width="1.7" height="1.6" rx="0.6" fill="#3f7a1e"/><rect x="12.2" y="8.8" width="1.7" height="1.5" rx="0.6" fill="#a8780c"/></svg>
<span class="t" style="left:145.40px;top:808px;font-size:11.328px;line-height:12px;color:#1e1e1e;transform-origin:0 10px;transform:scaleY(1.010);">145</span>
<span class="t" style="left:178.70px;top:807px;font-size:12.446px;line-height:14px;color:#1e1e1e;transform-origin:0 11px;transform:scaleY(0.919);">19/03/2...</span>
<span class="t" style="left:248.60px;top:808px;font-size:11.416px;line-height:12px;color:#1e1e1e;transform-origin:0 10px;transform:scaleY(1.002);">PDT-0003</span>
<span class="t" style="left:358.80px;top:807px;font-size:11.854px;line-height:14px;color:#1e1e1e;transform-origin:0 11px;transform:scaleY(0.965);">Mesa de Jantar Linha Veneza 3.00 x ...</span>
<span class="t" style="left:608.02px;top:807px;font-size:12.100px;line-height:14px;color:#1e1e1e;transform-origin:0 11px;transform:scaleY(0.945);">10,00</span>
<svg style="left:646.6px;top:805.5500000000001px;" width="17" height="17" viewBox="0 0 16 16"><path d="M1 14.6L5.6 10" stroke="#3e3e3e" stroke-width="1.5" stroke-linecap="round"/><path d="M1.8 13.4L5 10.2" stroke="#8a8a8a" stroke-width="0.5"/><path d="M7.58 12.69L8.71 11.56L9.27 8.45L12.17 7.95L13.44 6.68L8.92 2.16L7.65 3.43L7.15 6.33L4.04 6.89L2.91 8.02Z" fill="#821a1f" stroke="#6a1116" stroke-width="0.5" stroke-linejoin="round"/><path d="M6.2 7.6L8.6 6.4L10.8 3.6" fill="none" stroke="#a04045" stroke-width="0.9" opacity="0.8"/></svg>
<span class="t" style="left:681.40px;top:808px;font-size:11.418px;line-height:12px;color:#1e1e1e;transform-origin:0 10px;transform:scaleY(1.002);">un</span>
<span class="t" style="left:709.00px;top:807px;font-size:12.665px;line-height:14px;color:#1e1e1e;transform-origin:0 11px;transform:scaleY(0.903);">19/03/25</span>
<svg style="left:765.9px;top:805.5500000000001px;" width="17" height="17" viewBox="0 0 16 16"><path d="M1 14.6L5.6 10" stroke="#3e3e3e" stroke-width="1.5" stroke-linecap="round"/><path d="M1.8 13.4L5 10.2" stroke="#8a8a8a" stroke-width="0.5"/><path d="M7.58 12.69L8.71 11.56L9.27 8.45L12.17 7.95L13.44 6.68L8.92 2.16L7.65 3.43L7.15 6.33L4.04 6.89L2.91 8.02Z" fill="#821a1f" stroke="#6a1116" stroke-width="0.5" stroke-linejoin="round"/><path d="M6.2 7.6L8.6 6.4L10.8 3.6" fill="none" stroke="#a04045" stroke-width="0.9" opacity="0.8"/></svg>
<span class="t" style="left:798.60px;top:807px;font-size:12.193px;line-height:14px;color:#1e1e1e;transform-origin:0 11px;transform:scaleY(0.938);">A produzir</span>
<span class="t" style="left:905.70px;top:807px;font-size:12.228px;line-height:14px;color:#1e1e1e;transform-origin:0 11px;transform:scaleY(0.936);">0,00</span>
<span class="t" style="left:988.92px;top:807px;font-size:12.100px;line-height:14px;color:#1e1e1e;transform-origin:0 11px;transform:scaleY(0.945);">10,00</span>
<div style="left:7px;top:825px;width:1251px;height:20px;background:#787a79;"></div>
<div style="left:19px;top:828px;width:13px;height:13px;background:#808080;border:1px solid #3c3c3c;border-radius:2.5px;"></div>
<svg style="left:49px;top:832.0px;" width="8" height="8" viewBox="0 0 8 8"><path d="M1.2 1.2L6.2 6.2M6.2 1.2L1.2 6.2" stroke="#6f0e0e" stroke-width="2.1"/></svg>
<svg style="left:62.4px;top:826.1999999999999px;" width="15" height="15" viewBox="0 0 15 15"><path d="M3.1 11.9L13 2" stroke="#7f4e14" stroke-width="3.7" stroke-linecap="butt"/><path d="M3.1 11.9L13 2" stroke="#a8681c" stroke-width="2.3" stroke-linecap="butt"/><path d="M0.5 14.3L1.5 10.4L4.6 13.4Z" fill="#b89a72"/><path d="M0.4 14.4L0.8 12.9L1.9 14Z" fill="#141414"/></svg>
<svg style="left:90px;top:825.8px;" width="16" height="16" viewBox="0 0 16 16"><defs><linearGradient id="pg" x1="0" y1="0" x2="0" y2="1"><stop offset="0" stop-color="#808284"/><stop offset="0.75" stop-color="#5e6062"/><stop offset="1" stop-color="#454647"/></linearGradient></defs><path d="M3.6 0.6H11.6L12.2 4.6H3Z" fill="#8b8c8c" stroke="#767777" stroke-width="0.5"/><path d="M1.8 4.4H13.8C14.5 4.4 15 4.9 15 5.6V12.6C15 13.2 14.6 13.6 14 13.6H1.6C1 13.6 0.6 13.2 0.6 12.6V5.6C0.6 4.9 1.1 4.4 1.8 4.4Z" fill="url(#pg)"/><path d="M3.4 10.4H12.2V15H3.4Z" fill="#878888" stroke="#6c6d6d" stroke-width="0.6"/><rect x="12.2" y="6.6" width="1.7" height="1.6" rx="0.6" fill="#3f7a1e"/><rect x="12.2" y="8.8" width="1.7" height="1.5" rx="0.6" fill="#a8780c"/></svg>
<span class="t" style="left:145.40px;top:830px;font-size:11.328px;line-height:12px;color:#1e1e1e;transform-origin:0 10px;transform:scaleY(1.010);">144</span>
<span class="t" style="left:178.70px;top:829px;font-size:12.446px;line-height:14px;color:#1e1e1e;transform-origin:0 11px;transform:scaleY(0.919);">09/04/2...</span>
<span class="t" style="left:248.60px;top:830px;font-size:11.249px;line-height:12px;color:#1e1e1e;transform-origin:0 10px;transform:scaleY(1.017);">SVC103</span>
<span class="t" style="left:358.80px;top:829px;font-size:11.942px;line-height:14px;color:#1e1e1e;transform-origin:0 11px;transform:scaleY(0.958);">Serviço de lustração</span>
<span class="t" style="left:614.75px;top:829px;font-size:12.100px;line-height:14px;color:#1e1e1e;transform-origin:0 11px;transform:scaleY(0.945);">1,00</span>
<svg style="left:646.6px;top:826.4px;" width="17" height="17" viewBox="0 0 16 16"><path d="M1 14.6L5.6 10" stroke="#3e3e3e" stroke-width="1.5" stroke-linecap="round"/><path d="M1.8 13.4L5 10.2" stroke="#8a8a8a" stroke-width="0.5"/><path d="M7.58 12.69L8.71 11.56L9.27 8.45L12.17 7.95L13.44 6.68L8.92 2.16L7.65 3.43L7.15 6.33L4.04 6.89L2.91 8.02Z" fill="#821a1f" stroke="#6a1116" stroke-width="0.5" stroke-linejoin="round"/><path d="M6.2 7.6L8.6 6.4L10.8 3.6" fill="none" stroke="#a04045" stroke-width="0.9" opacity="0.8"/></svg>
<span class="t" style="left:681.40px;top:830px;font-size:11.418px;line-height:12px;color:#1e1e1e;transform-origin:0 10px;transform:scaleY(1.002);">un</span>
<span class="t" style="left:709.00px;top:829px;font-size:12.665px;line-height:14px;color:#1e1e1e;transform-origin:0 11px;transform:scaleY(0.903);">09/04/25</span>
<svg style="left:765.9px;top:826.4px;" width="17" height="17" viewBox="0 0 16 16"><path d="M1 14.6L5.6 10" stroke="#3e3e3e" stroke-width="1.5" stroke-linecap="round"/><path d="M1.8 13.4L5 10.2" stroke="#8a8a8a" stroke-width="0.5"/><path d="M7.58 12.69L8.71 11.56L9.27 8.45L12.17 7.95L13.44 6.68L8.92 2.16L7.65 3.43L7.15 6.33L4.04 6.89L2.91 8.02Z" fill="#821a1f" stroke="#6a1116" stroke-width="0.5" stroke-linejoin="round"/><path d="M6.2 7.6L8.6 6.4L10.8 3.6" fill="none" stroke="#a04045" stroke-width="0.9" opacity="0.8"/></svg>
<span class="t" style="left:798.60px;top:829px;font-size:12.193px;line-height:14px;color:#1e1e1e;transform-origin:0 11px;transform:scaleY(0.938);">A produzir</span>
<span class="t" style="left:905.70px;top:829px;font-size:12.228px;line-height:14px;color:#1e1e1e;transform-origin:0 11px;transform:scaleY(0.936);">0,00</span>
<span class="t" style="left:995.65px;top:829px;font-size:12.100px;line-height:14px;color:#1e1e1e;transform-origin:0 11px;transform:scaleY(0.945);">1,00</span>
<div style="left:45px;top:718px;width:1px;height:127px;background:#666869;"></div>
<div style="left:83px;top:718px;width:1px;height:127px;background:#666869;"></div>
<div style="left:111px;top:718px;width:1px;height:127px;background:#666869;"></div>
<div style="left:171px;top:718px;width:1px;height:127px;background:#666869;"></div>
<div style="left:241px;top:718px;width:1px;height:127px;background:#666869;"></div>
<div style="left:351px;top:718px;width:1px;height:127px;background:#666869;"></div>
<div style="left:571px;top:718px;width:1px;height:127px;background:#666869;"></div>
<div style="left:671px;top:718px;width:1px;height:127px;background:#666869;"></div>
<div style="left:701px;top:718px;width:1px;height:127px;background:#666869;"></div>
<div style="left:791px;top:718px;width:1px;height:127px;background:#666869;"></div>
<div style="left:866px;top:718px;width:1px;height:127px;background:#666869;"></div>
<div style="left:936px;top:718px;width:1px;height:127px;background:#666869;"></div>
<div style="left:1026px;top:718px;width:1px;height:127px;background:#666869;"></div>
<div style="left:1258px;top:718px;width:15px;height:127px;background:#808080;"></div>
<svg style="left:1261px;top:834px;" width="10" height="7.5" viewBox="0 0 10 7.5"><path d="M0 0H9.5L4.75 7Z" fill="#353535"/></svg>
<div style="left:7px;top:845px;width:1266px;height:15px;background:#7e7e7e;"></div>
<svg style="left:11.5px;top:848.4px;" width="8" height="9" viewBox="0 0 8 9"><path d="M7.2 0V8.4L0 4.2Z" fill="#3c3c3c"/></svg>
<div style="left:25px;top:848px;width:1071px;height:9px;background:#454545;border-radius:4.2px;"></div>
<svg style="left:1246.5px;top:848.4px;" width="8" height="9" viewBox="0 0 8 9"><path d="M0 0V8.4L7.4 4.2Z" fill="#3c3c3c"/></svg>
<div style="left:7px;top:860px;width:1266px;height:1px;background:#595c5f;"></div>
<div style="left:7px;top:861px;width:1251px;height:21px;background:#626262;"></div>
<div style="left:1258px;top:861px;width:15px;height:21px;background:#7f7f7f;border-left:1px solid #585b5e;"></div>
<div style="left:45px;top:862px;width:1px;height:20px;background:#555;"></div>
<div style="left:83px;top:862px;width:1px;height:20px;background:#555;"></div>
<div style="left:111px;top:862px;width:1px;height:20px;background:#555;"></div>
<div style="left:171px;top:862px;width:1px;height:20px;background:#555;"></div>
<div style="left:241px;top:862px;width:1px;height:20px;background:#555;"></div>
<div style="left:351px;top:862px;width:1px;height:20px;background:#555;"></div>
<div style="left:571px;top:862px;width:1px;height:20px;background:#555;"></div>
<div style="left:671px;top:862px;width:1px;height:20px;background:#555;"></div>
<div style="left:701px;top:862px;width:1px;height:20px;background:#555;"></div>
<div style="left:791px;top:862px;width:1px;height:20px;background:#555;"></div>
<div style="left:866px;top:862px;width:1px;height:20px;background:#555;"></div>
<div style="left:936px;top:862px;width:1px;height:20px;background:#555;"></div>
<div style="left:1026px;top:862px;width:1px;height:20px;background:#555;"></div>
<span class="t" style="left:14.30px;top:864px;font-size:11.972px;line-height:14px;color:#1a1a1a;transform-origin:0 11px;transform:scaleY(0.956);">Totais:</span>
<span class="t" style="left:603.70px;top:864px;font-size:12.108px;line-height:14px;color:#1a1a1a;transform-origin:0 11px;transform:scaleY(0.945);">106.291,00</span>
<span class="t" style="left:874.80px;top:864px;font-size:12.296px;line-height:14px;color:#1a1a1a;transform-origin:0 11px;transform:scaleY(0.930);">80.210,00</span>
<span class="t" style="left:965.00px;top:864px;font-size:12.183px;line-height:14px;color:#1a1a1a;transform-origin:0 11px;transform:scaleY(0.939);">26.084,00</span>
<div style="left:6px;top:882px;width:1268px;height:1px;background:#5d6166;"></div>
<div style="left:6px;top:883px;width:1268px;height:3px;background:#82868c;"></div>
<div style="left:1273px;top:726px;width:1px;height:156px;background:#5d6166;"></div>
<div style="left:7px;top:158px;width:1267px;height:568px;background:#818282;border-radius:5px;box-shadow:0 0 6px 1px rgba(0,0,0,.45);"></div>
<div style="left:7px;top:158px;width:1267px;height:28px;border-radius:5px 5px 0 0;background:linear-gradient(#757676,#68696a);border-bottom:1px solid #5a5a5a;"></div>
<span class="t" style="left:15.00px;top:165px;font-size:17.821px;line-height:20px;color:#2a2a2a;transform-origin:0 16px;transform:scaleY(0.992);">Ordem de produção</span>
<svg style="left:1229.5px;top:165px;" width="18" height="15" viewBox="0 0 18 15"><path d="M9 1.2C4.3 1.2 0.9 3.5 0.9 6.6c0 1.9 1.2 3.4 3.1 4.3c-0.1 1.2-0.6 2.2-1.3 2.9c1.8-0.2 3.2-1.1 4.1-2.1c0.7 0.1 1.4 0.2 2.2 0.2c4.7 0 8.1-2.3 8.1-5.3S13.7 1.2 9 1.2Z" fill="none" stroke="#3c3c3c" stroke-width="1.1"/></svg>
<svg style="left:1253.5px;top:167.5px;" width="10" height="9" viewBox="0 0 10 9"><path d="M1.4 1L8 7.6M8 1L1.4 7.6" stroke="#1c1c1c" stroke-width="2.2"/></svg>
<div style="left:10px;top:189px;width:1261px;height:21px;background:#787878;border:1px solid #5c5c5c;"></div>
<span class="t" style="left:16.00px;top:194px;font-size:10.794px;line-height:12px;color:#242424;transform-origin:0 10px;transform:scaleY(1.060);">Ações</span>
<svg style="left:51.5px;top:196px;" width="8" height="5.5" viewBox="0 0 8 5.5"><path d="M0 0H8L4.0 4.5Z" fill="#1c1c1c"/></svg>
<div style="left:65px;top:190px;width:1px;height:19px;background:#5c5c5c;"></div>
<span class="t" style="left:71.30px;top:193px;font-size:11.846px;line-height:14px;color:#242424;transform-origin:0 11px;transform:scaleY(0.966);">Consultar</span>
<svg style="left:127.5px;top:196px;" width="8" height="5.5" viewBox="0 0 8 5.5"><path d="M0 0H8L4.0 4.5Z" fill="#1c1c1c"/></svg>
<div style="left:140px;top:190px;width:1px;height:19px;background:#5c5c5c;"></div>
<span class="t" style="left:146.30px;top:193px;font-size:11.913px;line-height:14px;color:#242424;transform-origin:0 11px;transform:scaleY(0.960);">Consultar insumo</span>
<svg style="left:244.5px;top:196px;" width="8" height="5.5" viewBox="0 0 8 5.5"><path d="M0 0H8L4.0 4.5Z" fill="#1c1c1c"/></svg>
<div style="left:257px;top:190px;width:1px;height:19px;background:#5c5c5c;"></div>
<span class="t" style="left:263.00px;top:192px;font-size:12.902px;line-height:15px;color:#242424;transform-origin:0 12px;transform:scaleY(0.887);">Imprimir/exportar</span>
<svg style="left:366.5px;top:196px;" width="8" height="5.5" viewBox="0 0 8 5.5"><path d="M0 0H8L4.0 4.5Z" fill="#1c1c1c"/></svg>
<div style="left:379px;top:190px;width:1px;height:19px;background:#5c5c5c;"></div>
<svg style="left:380.7px;top:192.39999999999998px;" width="16.6" height="16.6" viewBox="0 0 16.6 16.6"><defs><radialGradient id="hg389_200" cx="0.4" cy="0.3" r="0.8"><stop offset="0" stop-color="#2c5390"/><stop offset="1" stop-color="#122f66"/></radialGradient></defs><circle cx="8.3" cy="8.3" r="7.8" fill="url(#hg389_200)"/><text x="8.3" y="12.5" font-size="12" font-weight="bold" text-anchor="middle" fill="#a4a8b0" font-family="Liberation Sans">?</text></svg>
<svg style="left:407px;top:196px;" width="8" height="5.5" viewBox="0 0 8 5.5"><path d="M0 0H8L4.0 4.5Z" fill="#1c1c1c"/></svg>
<div style="left:419px;top:190px;width:1px;height:19px;background:#5c5c5c;"></div>
<div style="left:10px;top:212px;width:1260px;height:498px;background:#7c7d7d;border:1px solid #626262;"></div>
<span class="t" style="left:15.80px;top:224px;font-size:11.881px;line-height:14px;color:#0a0a0a;transform-origin:0 11px;transform:scaleY(0.963);">OP nº</span>
<div style="left:111px;top:220px;width:154px;height:20px;background:#7e7e7e;border:1px solid #5c5c5c;"></div>
<span class="t" style="left:113.30px;top:224px;font-size:11.388px;line-height:12px;color:#2e2e2e;transform-origin:0 10px;transform:scaleY(1.005);">161</span>
<span class="t" style="left:884.00px;top:230px;font-size:11.563px;line-height:12px;color:#0a0a0a;transform-origin:0 10px;transform:scaleY(0.989);">Estado</span>
<div style="left:999px;top:224px;width:114px;height:20px;background:#7e7e7e;border:1px solid #5c5c5c;"></div>
<span class="t" style="left:1001.40px;top:227px;font-size:12.127px;line-height:14px;color:#2e2e2e;transform-origin:0 11px;transform:scaleY(0.943);">A produzir</span>
<div style="left:1127px;top:218px;width:71px;height:28px;border:1px solid #626262;border-radius:3px;background:linear-gradient(#777777,#6b6b6b);"></div>
<span class="t" style="left:1136.40px;top:224px;font-size:14.504px;line-height:16px;color:#202020;transform-origin:0 13px;transform:scaleY(0.932);">Concluir</span>
<span class="t" style="left:884.00px;top:253px;font-size:11.841px;line-height:14px;color:#0a0a0a;transform-origin:0 11px;transform:scaleY(0.966);">Estado configurável</span>
<div style="left:999px;top:248px;width:110px;height:20px;background:#808080;border:1px solid #2c2c2c;border-radius:3px;"></div>
<svg style="left:1092.5px;top:254.8px;" width="10" height="7" viewBox="0 0 10 7"><path d="M1.2 1.2L5 5L8.8 1.2" fill="none" stroke="#0a0a0a" stroke-width="2" stroke-linecap="round" stroke-linejoin="round"/></svg>
<span class="t" style="left:15.80px;top:276px;font-size:13.368px;line-height:15px;color:#0a0a0a;transform-origin:0 12px;transform:scaleY(0.856);">Item*</span>
<div style="left:111px;top:272px;width:154px;height:20px;background:#7e7e7e;border:1px solid #5c5c5c;"></div>
<span class="t" style="left:113.30px;top:275px;font-size:11.723px;line-height:13px;color:#2e2e2e;transform-origin:0 11px;transform:scaleY(0.976);">00002</span>
<svg style="left:270.5px;top:277px;" width="12" height="12" viewBox="0 0 12 12"><circle cx="4.1" cy="4.1" r="3.1" fill="none" stroke="#111" stroke-width="1" opacity="0.85"/><path d="M6.7 6.7L10.2 10.2" stroke="#111" stroke-width="1.9" stroke-linecap="round"/></svg>
<span class="t" style="left:290.70px;top:277px;font-size:11.851px;line-height:14px;color:#1c1c1c;transform-origin:0 11px;transform:scaleY(0.965);">Chapa de MDP - 3 camadas 4 x 2</span>
<span class="t" style="left:15.80px;top:300px;font-size:12.122px;line-height:14px;color:#0a0a0a;transform-origin:0 11px;transform:scaleY(0.944);">Quantidade*</span>
<div style="left:111px;top:296px;width:109px;height:19px;background:#808080;border:1px solid #4a4a4a;"></div>
<span class="t" style="left:168.40px;top:299px;font-size:11.892px;line-height:14px;color:#050505;transform-origin:0 11px;transform:scaleY(0.962);">10,00000</span>
<span class="t" style="left:226.80px;top:299px;font-size:11.238px;line-height:12px;color:#262626;transform-origin:0 10px;transform:scaleY(1.018);">un</span>
<div style="left:253px;top:300px;width:13px;height:13px;background:#023c72;border-radius:2.5px;"></div>
<svg style="left:253px;top:300px;" width="13" height="13" viewBox="0 0 13 13"><path d="M2.8 6.6L5.4 9.2L10.2 3.6" fill="none" stroke="#8f8f8f" stroke-width="1.9" stroke-linecap="round" stroke-linejoin="round"/></svg>
<span class="t" style="left:269.00px;top:301px;font-size:11.700px;line-height:13px;color:#0a0a0a;transform-origin:0 11px;transform:scaleY(0.978);">Fixar</span>
<span class="t" style="left:15.80px;top:327px;font-size:11.733px;line-height:13px;color:#0a0a0a;transform-origin:0 11px;transform:scaleY(0.975);">Necessidade*</span>
<div style="left:111px;top:320px;width:60px;height:20px;background:#808080;border:1px solid #4a4a4a;"></div>
<span class="t" style="left:113.30px;top:323px;font-size:12.614px;line-height:14px;color:#050505;transform-origin:0 11px;transform:scaleY(0.907);">23/07/25</span>
<svg style="left:175.5px;top:323.5px;" width="13" height="14" viewBox="0 0 13 14"><path d="M1 2.6H12V10.4L9.6 13H1Z" fill="none" stroke="#111" stroke-width="1" stroke-linejoin="round"/><path d="M9.6 13V10.4H12" fill="none" stroke="#111" stroke-width="0.7"/><path d="M3.4 0.6v2.8M9.4 0.6v2.8" stroke="#111" stroke-width="1.3"/><text x="6.3" y="11.4" font-size="9" text-anchor="middle" fill="#111" font-family="Liberation Sans">8</text></svg>
<div style="left:210px;top:324px;width:13px;height:13px;background:#023c72;border-radius:2.5px;"></div>
<svg style="left:210px;top:324px;" width="13" height="13" viewBox="0 0 13 13"><path d="M2.8 6.6L5.4 9.2L10.2 3.6" fill="none" stroke="#8f8f8f" stroke-width="1.9" stroke-linecap="round" stroke-linejoin="round"/></svg>
<span class="t" style="left:226.00px;top:325px;font-size:11.700px;line-height:13px;color:#0a0a0a;transform-origin:0 11px;transform:scaleY(0.978);">Fixar</span>
<svg style="left:18.7px;top:345.6px;" width="6" height="10" viewBox="0 0 6 10"><path d="M0 0L4.7 4.3L0 8.6Z" fill="#111"/></svg>
<span class="t" style="left:28.80px;top:344px;font-size:11.383px;line-height:12px;color:#262626;transform-origin:0 10px;transform:scaleY(1.005);">Mais opções</span>
<svg style="left:99.7px;top:347.3px;" width="10" height="11" viewBox="0 0 10 11"><rect x="0.5" y="0.5" width="8.2" height="9.4" rx="0.8" fill="none" stroke="#333" stroke-width="0.9"/><path d="M2.2 3.1H7M2.2 5.2H7M2.2 7.3H7" stroke="#333" stroke-width="0.8"/></svg>
<svg style="left:18.7px;top:377.6px;" width="6" height="10" viewBox="0 0 6 10"><path d="M0 0L4.7 4.3L0 8.6Z" fill="#111"/></svg>
<span class="t" style="left:28.80px;top:376px;font-size:11.440px;line-height:12px;color:#262626;transform-origin:0 10px;transform:scaleY(1.000);">Observações</span>
<div style="left:16px;top:398px;width:75px;height:29px;border:1px solid #606060;border-radius:3px;background:linear-gradient(#777777,#6b6b6b);"></div>
<span class="t" style="left:24.60px;top:403px;font-size:15.760px;line-height:17px;color:#202020;transform-origin:0 14px;transform:scaleY(0.858);">Imprimir</span>
<svg style="left:17.6px;top:450px;" width="8" height="8" viewBox="0 0 8 8"><path d="M7 0V7H0Z" fill="#111"/></svg>
<span class="t" style="left:28.80px;top:446px;font-size:11.931px;line-height:14px;color:#262626;transform-origin:0 11px;transform:scaleY(0.959);">Ocultar insumos</span>
<svg style="left:122px;top:449.4px;" width="10" height="11" viewBox="0 0 10 11"><rect x="0.5" y="0.5" width="8.2" height="9.4" rx="0.8" fill="none" stroke="#333" stroke-width="0.9"/><path d="M2.2 3.1H7M2.2 5.2H7M2.2 7.3H7" stroke="#333" stroke-width="0.8"/></svg>
<svg style="left:18.7px;top:593.8px;" width="6" height="10" viewBox="0 0 6 10"><path d="M0 0L4.7 4.3L0 8.6Z" fill="#111"/></svg>
<span class="t" style="left:28.80px;top:591px;font-size:11.606px;line-height:13px;color:#262626;transform-origin:0 11px;transform:scaleY(0.986);">Reservas e vínculos</span>
<svg style="left:18.7px;top:612.8px;" width="6" height="10" viewBox="0 0 6 10"><path d="M0 0L4.7 4.3L0 8.6Z" fill="#111"/></svg>
<span class="t" style="left:28.80px;top:611px;font-size:11.488px;line-height:12px;color:#262626;transform-origin:0 10px;transform:scaleY(0.996);">Aparas</span>
<svg style="left:18.7px;top:631.8px;" width="6" height="10" viewBox="0 0 6 10"><path d="M0 0L4.7 4.3L0 8.6Z" fill="#111"/></svg>
<span class="t" style="left:28.80px;top:629px;font-size:11.955px;line-height:14px;color:#262626;transform-origin:0 11px;transform:scaleY(0.957);">Retiradas de materiais</span>
<svg style="left:18.7px;top:650.8px;" width="6" height="10" viewBox="0 0 6 10"><path d="M0 0L4.7 4.3L0 8.6Z" fill="#111"/></svg>
<span class="t" style="left:28.80px;top:649px;font-size:11.418px;line-height:12px;color:#262626;transform-origin:0 10px;transform:scaleY(1.002);">Conclusões da OP</span>
<svg style="left:18.7px;top:669.8px;" width="6" height="10" viewBox="0 0 6 10"><path d="M0 0L4.7 4.3L0 8.6Z" fill="#111"/></svg>
<span class="t" style="left:28.80px;top:668px;font-size:11.513px;line-height:12px;color:#262626;transform-origin:0 10px;transform:scaleY(0.994);">Anexos</span>
<svg style="left:18.7px;top:688.8px;" width="6" height="10" viewBox="0 0 6 10"><path d="M0 0L4.7 4.3L0 8.6Z" fill="#111"/></svg>
<span class="t" style="left:28.80px;top:687px;font-size:11.575px;line-height:12px;color:#262626;transform-origin:0 10px;transform:scaleY(0.988);">Anotações</span>
<span class="t" style="left:967.00px;top:710px;font-size:12.261px;line-height:14px;color:#1e1e1e;transform-origin:0 11px;transform:scaleY(0.933);">Criado em 23/07/2025 15:13:58 por Samuel Gonçalves.</span>
<div style="left:31px;top:464px;width:1234px;height:113px;background:#7c7c7c;border:1px solid #606366;"></div>
<div style="left:32px;top:466px;width:1232px;height:26px;background:#7b7d7c;"></div>
<div style="left:40px;top:467px;width:56px;height:23px;background:#416603;border-radius:3px;"></div>
<span class="t" style="left:49.60px;top:469px;font-size:14.960px;line-height:17px;color:#9a9d96;transform-origin:0 14px;transform:scaleY(0.973);font-weight:bold;-webkit-text-stroke:0.52px currentColor;">Novo</span>
<div style="left:104px;top:465px;width:1px;height:24px;background:#5c5c5c;"></div>
<div style="left:134px;top:465px;width:1px;height:24px;background:#5c5c5c;"></div>
<div style="left:164px;top:465px;width:1px;height:24px;background:#5c5c5c;"></div>
<svg style="left:112.5px;top:472px;" width="15" height="12" viewBox="0 0 15 12"><path d="M9.4 2.2A4.3 4.3 0 0 0 3.3 5.2" fill="none" stroke="#0c0c0c" stroke-width="1.8"/><path d="M0.4 4.6H6.2L3.3 8.4Z" fill="#0c0c0c"/><path d="M5.6 9.8A4.3 4.3 0 0 0 11.7 6.8" fill="none" stroke="#0c0c0c" stroke-width="1.8"/><path d="M8.8 7.4H14.6L11.7 3.6Z" fill="#0c0c0c"/></svg>
<svg style="left:140.5px;top:469.8px;" width="17" height="17" viewBox="0 0 17 17"><defs><radialGradient id="hg149_478" cx="0.4" cy="0.3" r="0.8"><stop offset="0" stop-color="#2c5390"/><stop offset="1" stop-color="#122f66"/></radialGradient></defs><circle cx="8.5" cy="8.5" r="8" fill="url(#hg149_478)"/><text x="8.5" y="12.7" font-size="12" font-weight="bold" text-anchor="middle" fill="#a4a8b0" font-family="Liberation Sans">?</text></svg>
<svg style="left:170.4px;top:474px;" width="8" height="9" viewBox="0 0 8 9"><path d="M0.7 0V8.4" stroke="#5a5a5a" stroke-width="1.4"/><path d="M7.6 0V8.4L2.2 4.2Z" fill="#5a5a5a"/></svg>
<svg style="left:191.7px;top:474px;" width="6" height="9" viewBox="0 0 6 9"><path d="M5 0V8.4L0 4.2Z" fill="#5a5a5a"/></svg>
<div style="left:212px;top:467px;width:16px;height:22px;background:#808080;border:1px solid #565656;border-radius:5px;"></div>
<span class="t" style="left:217.30px;top:473px;font-size:9.889px;line-height:11px;color:#1c1c1c;transform-origin:0 9px;transform:scaleY(1.157);">1</span>
<div style="left:235px;top:467px;width:50px;height:19px;background:#747474;border:1px solid #5c5c5c;"></div>
<span class="t" style="left:240.00px;top:469px;font-size:11.627px;line-height:13px;color:#1c1c1c;transform-origin:0 11px;transform:scaleY(0.984);">200</span>
<svg style="left:270px;top:476.5px;" width="8" height="5" viewBox="0 0 8 5"><path d="M0 0H8L4.0 4Z" fill="#161616"/></svg>
<svg style="left:292px;top:474px;" width="6" height="9" viewBox="0 0 6 9"><path d="M0 0V8.4L5 4.2Z" fill="#5a5a5a"/></svg>
<svg style="left:310.8px;top:474px;" width="8" height="9" viewBox="0 0 8 9"><path d="M7.1 0V8.4" stroke="#5a5a5a" stroke-width="1.4"/><path d="M0 0V8.4L5.4 4.2Z" fill="#5a5a5a"/></svg>
<span class="t" style="left:1123.70px;top:470px;font-size:12.256px;line-height:14px;color:#2a2a2a;transform-origin:0 11px;transform:scaleY(0.933);">Exibindo itens 1 - 2 de 2</span>
<div style="left:32px;top:492px;width:1232px;height:26px;background:linear-gradient(#7b7c7c,#6f7071);border-top:1px solid #5f6163;border-bottom:1px solid #5b5f66;"></div>
<div style="left:36px;top:499px;width:13px;height:12px;background:#808080;border:1px solid #404040;border-radius:2.5px;"></div>
<span class="t" style="left:67.20px;top:499px;font-size:11.470px;line-height:12px;color:#2c2c2c;transform-origin:0 10px;transform:scaleY(0.997);">Oper</span>
<span class="t" style="left:107.30px;top:499px;font-size:11.392px;line-height:12px;color:#2c2c2c;transform-origin:0 10px;transform:scaleY(1.004);">Código</span>
<span class="t" style="left:217.30px;top:499px;font-size:11.449px;line-height:12px;color:#2c2c2c;transform-origin:0 10px;transform:scaleY(0.999);">Descrição</span>
<span class="t" style="left:929.00px;top:498px;font-size:11.981px;line-height:14px;color:#2c2c2c;transform-origin:0 11px;transform:scaleY(0.955);">Qt a baixar</span>
<span class="t" style="left:1078.60px;top:498px;font-size:12.098px;line-height:14px;color:#2c2c2c;transform-origin:0 11px;transform:scaleY(0.946);">Lote interno</span>
<div style="left:1168.3px;top:495px;width:80.5px;height:20px;overflow:hidden;">
<span class="t" style="left:0.00px;top:4px;font-size:11.866px;line-height:14px;color:#2c2c2c;transform-origin:0 11px;transform:scaleY(0.964);">Lote do fabricante</span>
</div>
<div style="left:32px;top:519px;width:1217px;height:21px;background:#7e5c0b;"></div>
<div style="left:32px;top:540px;width:1217px;height:21px;background:#7b7d7c;"></div>
<div style="left:1249px;top:492px;width:15px;height:70px;background:#7c7c7c;"></div>
<div style="left:1249px;top:492px;width:15px;height:26px;background:linear-gradient(#7b7c7c,#707171);border:1px solid #5f6163;border-right:0;"></div>
<div style="left:60px;top:493px;width:1px;height:68px;background:#64676a;"></div>
<div style="left:100px;top:493px;width:1px;height:68px;background:#64676a;"></div>
<div style="left:210px;top:493px;width:1px;height:68px;background:#64676a;"></div>
<div style="left:410px;top:493px;width:1px;height:68px;background:#64676a;"></div>
<div style="left:557px;top:493px;width:1px;height:68px;background:#64676a;"></div>
<div style="left:661px;top:493px;width:1px;height:68px;background:#64676a;"></div>
<div style="left:730px;top:493px;width:2px;height:68px;background:#64676a;"></div>
<div style="left:771px;top:493px;width:1px;height:68px;background:#64676a;"></div>
<div style="left:921px;top:493px;width:1px;height:68px;background:#64676a;"></div>
<div style="left:1071px;top:493px;width:1px;height:68px;background:#64676a;"></div>
<div style="left:1161px;top:493px;width:1px;height:68px;background:#64676a;"></div>
<div style="left:1249px;top:493px;width:1px;height:68px;background:#64676a;"></div>
<div style="left:33px;top:522px;width:13px;height:13px;background:#808080;border:1px solid #3c3c3c;border-radius:2.5px;"></div>
<div style="left:33px;top:544px;width:13px;height:13px;background:#808080;border:1px solid #3c3c3c;border-radius:2.5px;"></div>
<span class="t" style="left:82.70px;top:523px;font-size:11.238px;line-height:12px;color:#080808;transform-origin:0 10px;transform:scaleY(1.018);">10</span>
<span class="t" style="left:107.30px;top:522px;font-size:11.903px;line-height:14px;color:#080808;transform-origin:0 11px;transform:scaleY(0.961);">00035</span>
<span class="t" style="left:217.30px;top:523px;font-size:11.380px;line-height:12px;color:#080808;transform-origin:0 10px;transform:scaleY(1.005);">Perfil de MDP</span>
<span class="t" style="left:499.53px;top:522px;font-size:12.100px;line-height:14px;color:#080808;transform-origin:0 11px;transform:scaleY(0.945);">10,00000</span>
<span class="t" style="left:636.00px;top:522px;font-size:12.454px;line-height:14px;color:#080808;transform-origin:0 11px;transform:scaleY(0.919);">0%</span>
<span class="t" style="left:693.72px;top:522px;font-size:12.100px;line-height:14px;color:#080808;transform-origin:0 11px;transform:scaleY(0.945);">10,00</span>
<span class="t" style="left:739.00px;top:523px;font-size:11.238px;line-height:12px;color:#080808;transform-origin:0 10px;transform:scaleY(1.018);">un</span>
<span class="t" style="left:884.22px;top:522px;font-size:12.100px;line-height:14px;color:#080808;transform-origin:0 11px;transform:scaleY(0.945);">10,00</span>
<svg style="left:988px;top:522px;" width="16" height="16" viewBox="0 0 16 16"><path d="M2 7.4L5.6 11.2L14.5 0.7L15 1.2L5.8 14.3L0.6 8.9Z" fill="#4d7e02"/></svg>
<span class="t" style="left:82.70px;top:545px;font-size:11.238px;line-height:12px;color:#262626;transform-origin:0 10px;transform:scaleY(1.018);">20</span>
<span class="t" style="left:107.30px;top:544px;font-size:11.903px;line-height:14px;color:#262626;transform-origin:0 11px;transform:scaleY(0.961);">00054</span>
<span class="t" style="left:217.30px;top:545px;font-size:11.277px;line-height:12px;color:#262626;transform-origin:0 10px;transform:scaleY(1.014);">Ripas de MDP</span>
<span class="t" style="left:499.53px;top:544px;font-size:12.100px;line-height:14px;color:#262626;transform-origin:0 11px;transform:scaleY(0.945);">10,00000</span>
<span class="t" style="left:636.00px;top:544px;font-size:12.454px;line-height:14px;color:#262626;transform-origin:0 11px;transform:scaleY(0.919);">0%</span>
<span class="t" style="left:693.72px;top:544px;font-size:12.100px;line-height:14px;color:#262626;transform-origin:0 11px;transform:scaleY(0.945);">10,00</span>
<span class="t" style="left:739.00px;top:545px;font-size:11.238px;line-height:12px;color:#262626;transform-origin:0 10px;transform:scaleY(1.018);">un</span>
<span class="t" style="left:890.95px;top:544px;font-size:12.100px;line-height:14px;color:#262626;transform-origin:0 11px;transform:scaleY(0.945);">4,00</span>
<svg style="left:988px;top:544.2px;" width="16" height="16" viewBox="0 0 16 16"><path d="M2 7.4L5.6 11.2L14.5 0.7L15 1.2L5.8 14.3L0.6 8.9Z" fill="#4d7e02"/></svg>
<svg style="left:1252px;top:524px;" width="10" height="7.5" viewBox="0 0 10 7.5"><path d="M0 6.8H9.4L4.7 0Z" fill="#343434"/></svg>
<svg style="left:1252px;top:550px;" width="10" height="7.5" viewBox="0 0 10 7.5"><path d="M0 0H9.4L4.7 6.8Z" fill="#343434"/></svg>
<div style="left:32px;top:561px;width:1232px;height:15px;background:#808080;"></div>
<svg style="left:36.3px;top:564.6px;" width="8" height="9" viewBox="0 0 8 9"><path d="M7.4 0V8.2L0 4.1Z" fill="#3a3a3a"/></svg>
<div style="left:56px;top:565px;width:874px;height:7px;background:#444;border-radius:3.9px;"></div>
<svg style="left:1237px;top:564.6px;" width="8" height="9" viewBox="0 0 8 9"><path d="M0 0V8.2L7.6 4.1Z" fill="#3a3a3a"/></svg>
<div style="left:387px;top:303px;width:507px;height:219px;background:#ffffff;border-radius:5px;box-shadow:0 0 5px 1px rgba(172,172,172,.55);"></div>
<div style="left:387px;top:303px;width:507px;height:26px;border-radius:5px 5px 0 0;background:linear-gradient(#f3f4f5,#d7dadf);border-bottom:1px solid #b9bec6;"></div>
<span class="t" style="left:395.80px;top:308px;font-size:17.749px;line-height:20px;color:#4c4c4c;transform-origin:0 16px;transform:scaleY(0.938);">Conclusão da ordem de produção</span>
<svg style="left:850.5px;top:308.5px;" width="18" height="15" viewBox="0 0 18 15"><path d="M9 1.2C4.3 1.2 0.9 3.5 0.9 6.6c0 1.9 1.2 3.4 3.1 4.3c-0.1 1.2-0.6 2.2-1.3 2.9c1.8-0.2 3.2-1.1 4.1-2.1c0.7 0.1 1.4 0.2 2.2 0.2c4.7 0 8.1-2.3 8.1-5.3S13.7 1.2 9 1.2Z" fill="none" stroke="#6e6e6e" stroke-width="1.3"/><path d="M3.6 5.2C4.4 3.6 6.2 2.8 8.4 2.7" fill="none" stroke="#8a8a8a" stroke-width="0.8"/></svg>
<svg style="left:873.8px;top:311.4px;" width="10" height="9" viewBox="0 0 10 9"><path d="M1.4 1L8 7.6M8 1L1.4 7.6" stroke="#4a4a4a" stroke-width="2.3"/></svg>
<div style="left:390px;top:332px;width:501px;height:137px;background:#f6f7f8;border:1px solid #a9b0ba;"></div>
<span class="t" style="left:396.30px;top:345px;font-size:11.918px;line-height:14px;color:#000;transform-origin:0 11px;transform:scaleY(0.960);">Ordem de produção</span>
<div style="left:526px;top:340px;width:74px;height:20px;background:#fafafa;border:1px solid #a6a6a6;"></div>
<span class="t" style="left:528.40px;top:345px;font-size:11.388px;line-height:12px;color:#4c4c4c;transform-origin:0 10px;transform:scaleY(1.005);">161</span>
<svg style="left:606px;top:345.5px;" width="12" height="12" viewBox="0 0 12 12"><circle cx="4.1" cy="4.1" r="3.1" fill="none" stroke="#222" stroke-width="1" opacity="0.85"/><path d="M6.7 6.7L10.2 10.2" stroke="#222" stroke-width="1.9" stroke-linecap="round"/></svg>
<span class="t" style="left:626.80px;top:345px;font-size:11.708px;line-height:13px;color:#333;transform-origin:0 11px;transform:scaleY(0.977);">00002 Chapa de MDP - 3 cama...</span>
<span class="t" style="left:396.30px;top:369px;font-size:12.649px;line-height:14px;color:#000;transform-origin:0 11px;transform:scaleY(0.904);">Item</span>
<div style="left:526px;top:365px;width:154px;height:19px;background:#fafafa;border:1px solid #a6a6a6;"></div>
<span class="t" style="left:528.40px;top:367px;font-size:11.975px;line-height:14px;color:#4c4c4c;transform-origin:0 11px;transform:scaleY(0.955);">00002</span>
<svg style="left:685.5px;top:369.3px;" width="12" height="12" viewBox="0 0 12 12"><circle cx="4.1" cy="4.1" r="3.1" fill="none" stroke="#222" stroke-width="1" opacity="0.85"/><path d="M6.7 6.7L10.2 10.2" stroke="#222" stroke-width="1.9" stroke-linecap="round"/></svg>
<span class="t" style="left:707.00px;top:369px;font-size:11.831px;line-height:14px;color:#333;transform-origin:0 11px;transform:scaleY(0.967);">Chapa de MDP - 3 camadas 4 x 2</span>
<span class="t" style="left:396.30px;top:392px;font-size:12.302px;line-height:14px;color:#000;transform-origin:0 11px;transform:scaleY(0.930);">Quantidade*</span>
<div style="left:526px;top:388px;width:109px;height:19px;background:#fff;border:1px solid #8c8c8c;"></div>
<span class="t" style="left:590.00px;top:391px;font-size:11.896px;line-height:14px;color:#000;transform-origin:0 11px;transform:scaleY(0.962);">8,00000</span>
<span class="t" style="left:646.40px;top:391px;font-size:11.328px;line-height:12px;color:#333;transform-origin:0 10px;transform:scaleY(1.010);">un</span>
<div style="left:660px;top:386px;width:90px;height:25px;border:3px solid #f01018;border-radius:1.5px;"></div>
<div style="left:669px;top:393px;width:13px;height:12px;background:#fff;border:1px solid #767676;border-radius:2.5px;"></div>
<span class="t" style="left:684.70px;top:394px;font-size:11.086px;line-height:12px;color:#000;transform-origin:0 10px;transform:scaleY(1.032);">Fechar OP</span>
<span class="t" style="left:396.30px;top:417px;font-size:11.827px;line-height:14px;color:#000;transform-origin:0 11px;transform:scaleY(0.967);">Destino</span>
<div style="left:526px;top:412px;width:142px;height:20px;background:#fff;border:1px solid #2a2a2a;border-radius:3px;"></div>
<span class="t" style="left:531.00px;top:417px;font-size:11.582px;line-height:12px;color:#000;transform-origin:0 10px;transform:scaleY(0.988);">Estoque</span>
<svg style="left:654.4px;top:419.3px;" width="10" height="7" viewBox="0 0 10 7"><path d="M1.2 1.2L5 5L8.8 1.2" fill="none" stroke="#000" stroke-width="2" stroke-linecap="round" stroke-linejoin="round"/></svg>
<div style="left:689px;top:412px;width:144px;height:20px;background:#fff;border:1px solid #2a2a2a;border-radius:3px;"></div>
<span class="t" style="left:694.00px;top:416px;font-size:12.457px;line-height:14px;color:#000;transform-origin:0 11px;transform:scaleY(0.918);">Intermediário</span>
<svg style="left:819.3px;top:419.3px;" width="10" height="7" viewBox="0 0 10 7"><path d="M1.2 1.2L5 5L8.8 1.2" fill="none" stroke="#000" stroke-width="2" stroke-linecap="round" stroke-linejoin="round"/></svg>
<span class="t" style="left:396.30px;top:441px;font-size:11.780px;line-height:13px;color:#000;transform-origin:0 11px;transform:scaleY(0.971);">Endereço de estoque</span>
<div style="left:526px;top:436px;width:109px;height:20px;background:#fff;border:1px solid #b0b0b0;"></div>
<svg style="left:640.3px;top:441.6px;" width="12" height="12" viewBox="0 0 12 12"><circle cx="4.1" cy="4.1" r="3.1" fill="none" stroke="#222" stroke-width="1" opacity="0.85"/><path d="M6.7 6.7L10.2 10.2" stroke="#222" stroke-width="1.9" stroke-linecap="round"/></svg>
<div style="left:390px;top:480px;width:78px;height:28px;background:#7ab800;border-radius:3.5px;background:linear-gradient(#80bd06,#74b000);"></div>
<span class="t" style="left:399.30px;top:486px;font-size:14.720px;line-height:16px;color:#fff;transform-origin:0 13px;transform:scaleY(0.918);font-weight:bold;-webkit-text-stroke:0.52px currentColor;">Concluir</span>
<div style="left:472px;top:480px;width:74px;height:28px;border:1px solid #b4b6b9;border-radius:3.5px;background:linear-gradient(#f1f2f4,#d9dbde);"></div>
<span class="t" style="left:480.80px;top:486px;font-size:13.943px;line-height:16px;color:#444;transform-origin:0 13px;transform:scaleY(0.970);">Cancelar</span>
</div></body></html>
